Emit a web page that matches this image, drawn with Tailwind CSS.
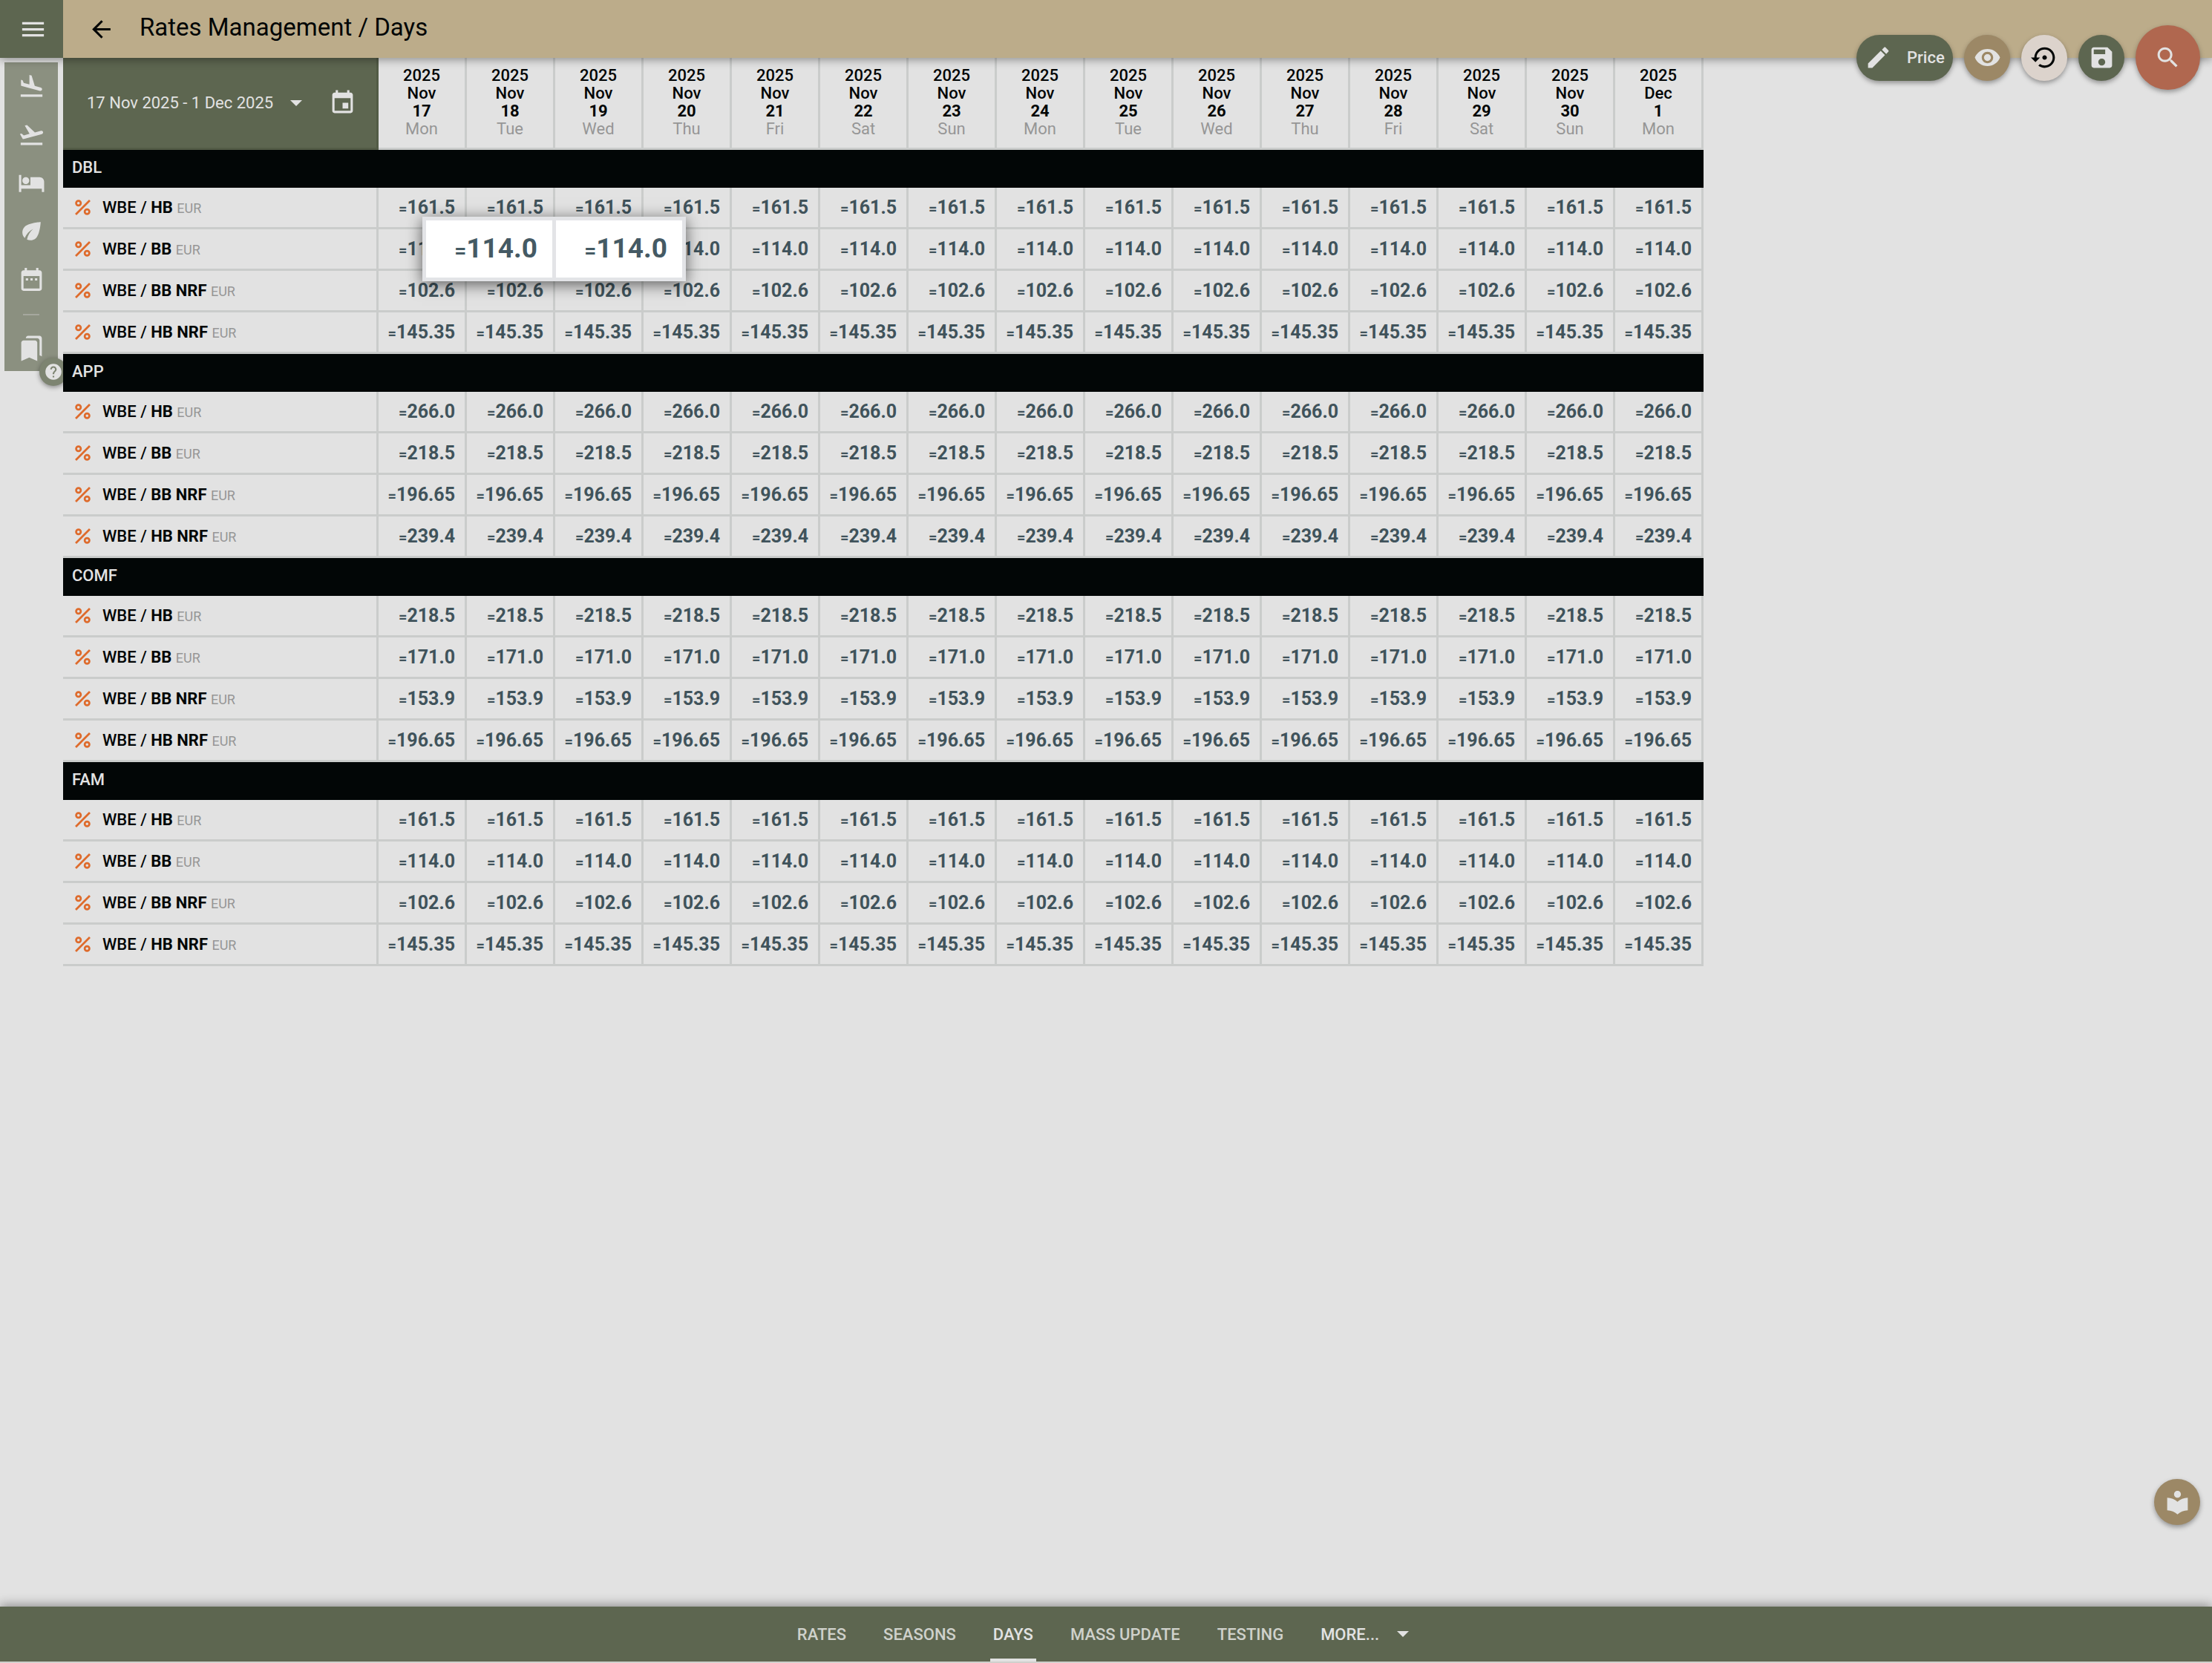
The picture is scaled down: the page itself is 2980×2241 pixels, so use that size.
<!DOCTYPE html>
<html lang="en">
<head>
  <meta charset="UTF-8" />
  <title>Rates Management / Days</title>
  <meta name="viewport" content="width=device-width, initial-scale=1.0">
  <script src="https://cdn.jsdelivr.net/npm/@tailwindcss/browser@4"></script>
</head>
<body class="bg-[#e2e2e2] text-[#020606] font-[Roboto,sans-serif] text-[22px] font-medium">
  <div class="relative flex min-h-screen flex-col">
    <header class="relative z-20 flex h-[78px] bg-[#bcac8a] shadow-[0_2px_12px_rgba(0,0,0,0.4)]">
      <button type="button" aria-label="Menu" class="flex w-[85px] items-center justify-center bg-[#5d6650] pl-[3px] text-[#e2e2e2]">
        <svg class="size-[39px]" viewBox="0 0 24 24" fill="currentColor"><path d="M3 18h18v-2H3v2zm0-5h18v-2H3v2zm0-7v2h18V6H3z"/></svg>
      </button>
      <a href="#" aria-label="Back" class="flex w-[103px] items-center justify-center">
        <svg class="size-[37px]" viewBox="0 0 24 24" fill="currentColor"><path d="M20 11H7.83l5.59-5.59L12 4l-8 8 8 8 1.41-1.41L7.83 13H20v-2z"/></svg>
      </a>
      <h1 class="self-center pb-1 text-[33px] font-normal">Rates Management / Days</h1>

      <!-- page actions -->
      <div class="absolute top-[34px] right-4 flex items-center gap-[15px] text-[#e2e2e2]">
        <button type="button" class="flex h-[62px] w-[130px] items-center gap-5 rounded-full bg-[#5d6650] pl-[11px] shadow-[0_3px_6px_rgba(0,0,0,0.35)]">
          <svg class="size-[37px]" viewBox="0 0 24 24" fill="currentColor"><path d="M3 17.25V21h3.75L17.81 9.94l-3.75-3.75L3 17.25zM20.71 7.04c.39-.39.39-1.02 0-1.41l-2.34-2.34c-.39-.39-1.02-.39-1.41 0l-1.83 1.83 3.75 3.75 1.83-1.83z"/></svg>
          Price
        </button>
        <button type="button" aria-label="Preview" class="flex size-[62px] items-center justify-center rounded-full bg-[#9c8866] shadow-[0_3px_6px_rgba(0,0,0,0.35)]">
          <svg class="size-[37px]" viewBox="0 0 24 24" fill="currentColor"><path d="M12 4.5C7 4.5 2.73 7.61 1 12c1.73 4.39 6 7.5 11 7.5s9.27-3.11 11-7.5c-1.73-4.39-6-7.5-11-7.5zM12 17c-2.76 0-5-2.24-5-5s2.24-5 5-5 5 2.24 5 5-2.24 5-5 5zm0-8c-1.66 0-3 1.34-3 3s1.34 3 3 3 3-1.34 3-3-1.34-3-3-3z"/></svg>
        </button>
        <button type="button" aria-label="Restore" class="flex size-[62px] items-center justify-center rounded-full bg-[#dcd3cc] text-[#020606] shadow-[0_3px_6px_rgba(0,0,0,0.35)]">
          <svg class="size-[37px]" viewBox="0 0 24 24" fill="currentColor"><path d="M14 12c0-1.1-.9-2-2-2s-2 .9-2 2 .9 2 2 2 2-.9 2-2zm-2-9c-4.97 0-9 4.03-9 9H0l4 4 4-4H5c0-3.87 3.13-7 7-7s7 3.13 7 7-3.13 7-7 7c-1.51 0-2.91-.49-4.06-1.3l-1.42 1.44C8.04 20.3 9.94 21 12 21c4.97 0 9-4.03 9-9s-4.03-9-9-9z"/></svg>
        </button>
        <button type="button" aria-label="Save" class="flex size-[62px] items-center justify-center rounded-full bg-[#5d6650] shadow-[0_3px_6px_rgba(0,0,0,0.35)]">
          <svg class="size-[37px]" viewBox="0 0 24 24" fill="currentColor"><path d="M17 3H5c-1.11 0-2 .9-2 2v14c0 1.1.89 2 2 2h14c1.1 0 2-.9 2-2V7l-4-4zm-5 16c-1.66 0-3-1.34-3-3s1.34-3 3-3 3 1.34 3 3-1.34 3-3 3zm3-10H5V5h10v4z"/></svg>
        </button>
        <button type="button" aria-label="Search" class="flex size-[87px] items-center justify-center rounded-full bg-[#b0674f] shadow-[0_3px_6px_rgba(0,0,0,0.35)]">
          <svg class="size-[37px]" viewBox="0 0 24 24" fill="currentColor"><path d="M15.5 14h-.79l-.28-.27C15.41 12.59 16 11.11 16 9.5 16 5.91 13.09 3 9.5 3S3 5.91 3 9.5 5.91 16 9.5 16c1.61 0 3.09-.59 4.23-1.57l.27.28v.79l5 4.99L20.49 19l-4.99-5zm-6 0C7.01 14 5 11.99 5 9.5S7.01 5 9.5 5 14 7.01 14 9.5 11.99 14 9.5 14z"/></svg>
        </button>
      </div>
    </header>

    <div class="flex flex-1 items-start">
      <aside class="w-[85px] pt-[6px] pl-[6px]">
        <div class="relative flex h-[416px] w-[72px] flex-col items-center gap-7 bg-[#8b9080] pt-[14px] text-[#e2e2e2]">
          <a href="#" aria-label="Arrivals"><svg class="size-[37px]" viewBox="0 0 24 24" fill="currentColor"><path d="M2.5 19h19v2h-19v-2zm7.18-5.73l4.35 1.16 5.31 1.42c.8.21 1.62-.26 1.84-1.06.21-.8-.26-1.62-1.06-1.84l-5.31-1.42-2.76-9.02L10.12 2v8.28L5.15 8.95l-.93-2.32-1.45-.39v5.17l1.6.43 5.31 1.43z"/></svg></a>
          <a href="#" aria-label="Departures"><svg class="size-[37px]" viewBox="0 0 24 24" fill="currentColor"><path d="M2.5 19h19v2h-19v-2zm19.57-9.36c-.21-.8-1.04-1.28-1.84-1.06L14.92 10l-6.9-6.43-1.93.51 4.14 7.17-4.97 1.33-1.97-1.54-1.45.39 1.82 3.16.77 1.33 1.6-.43 5.31-1.42 4.35-1.16L21 11.49c.81-.23 1.28-1.05 1.07-1.85z"/></svg></a>
          <a href="#" aria-label="Rooms"><svg class="size-[37px]" viewBox="0 0 24 24" fill="currentColor"><path d="M7 13c1.66 0 3-1.34 3-3S8.66 7 7 7s-3 1.34-3 3 1.34 3 3 3zm12-6h-8v7H3V5H1v15h2v-3h18v3h2v-9c0-2.21-1.79-4-4-4z"/></svg></a>
          <a href="#" aria-label="Seasons"><svg class="size-[37px]" viewBox="0 0 24 24" fill="currentColor"><path d="M6.05 8.05c-2.73 2.73-2.73 7.15-.02 9.88 1.47-3.4 4.09-6.24 7.36-7.93-2.77 2.34-4.71 5.61-5.39 9.32 2.6 1.23 5.8.78 7.95-1.37C19.43 14.47 20 4 20 4S9.53 4.57 6.05 8.05z"/></svg></a>
          <a href="#" aria-label="Calendar"><svg class="size-[37px]" viewBox="0 0 24 24" fill="currentColor"><path d="M9 11H7v2h2v-2zm4 0h-2v2h2v-2zm4 0h-2v2h2v-2zm2-7h-1V2h-2v2H8V2H6v2H5c-1.11 0-2 .9-2 2v14c0 1.1.89 2 2 2h14c1.1 0 2-.9 2-2V6c0-1.1-.9-2-2-2zm0 16H5V9h14v11z"/></svg></a>
          <hr class="-mb-[2px] w-[22px] border-t-2 border-[#a5a89e]">
          <a href="#" aria-label="Bookmarks"><svg class="size-[37px]" viewBox="0 0 24 24" fill="currentColor"><path d="M19 18l2 1V3c0-1.1-.9-2-2-2H8.99C7.89 1 7 1.9 7 3h10c1.1 0 2 .9 2 2v13zM15 5H5c-1.1 0-2 .9-2 2v16l7-3 7 3V7c0-1.1-.9-2-2-2z"/></svg></a>
          <button type="button" aria-label="Help" class="absolute -right-[13px] -bottom-5 flex size-[38px] items-center justify-center rounded-full bg-[#7d8471] shadow-[0_2px_6px_rgba(0,0,0,0.4)]">
            <svg class="size-[26px]" viewBox="0 0 24 24" fill="currentColor"><path d="M12 2C6.48 2 2 6.48 2 12s4.48 10 10 10 10-4.48 10-10S17.52 2 12 2zm1 17h-2v-2h2v2zm2.07-7.75l-.9.92C13.45 12.9 13 13.5 13 15h-2v-.5c0-1.1.45-2.1 1.17-2.83l1.24-1.26c.37-.36.59-.86.59-1.41 0-1.1-.9-2-2-2s-2 .9-2 2H8c0-2.21 1.79-4 4-4s4 1.79 4 4c0 .88-.36 1.68-.93 2.25z"/></svg>
          </button>
        </div>
      </aside>

      <main class="relative z-10">
        <table class="table-fixed border-separate border-spacing-0 bg-[#e2e2e2]">
          <thead>
            <tr id="days">
              <th class="h-[124px] w-[425px] border-r-[3px] border-b-[3px] border-[#525b46] bg-[#5d6650] p-0 text-[#e2e2e2]">
                <div class="flex items-center pl-8 font-normal">
                  <div class="relative">
                    <select aria-label="Period" class="w-[290px] appearance-none">
                      <option>17 Nov 2025 - 1 Dec 2025</option>
                    </select>
                    <svg class="pointer-events-none absolute top-1/2 right-0 h-2 w-4 -translate-y-1/2" viewBox="0 0 16 8" fill="currentColor"><path d="M0 0h16L8 8z"/></svg>
                  </div>
                  <button type="button" aria-label="Pick dates" class="ml-9">
                    <svg class="size-[37px]" viewBox="0 0 24 24" fill="currentColor"><path d="M17 12h-5v5h5v-5zM16 1v2H8V1H6v2H5c-1.11 0-1.99.9-1.99 2L3 19c0 1.1.89 2 2 2h14c1.1 0 2-.9 2-2V5c0-1.1-.9-2-2-2h-1V1h-2zm3 18H5V8h14v11z"/></svg>
                  </button>
                </div>
              </th>
            </tr>
          </thead>
          <tbody id="rates"></tbody>
        </table>

        <!-- selected cells -->
        <div class="absolute top-[214px] left-[484px] flex gap-[5px] border-[5px] border-[#e3e4e7] bg-[#e3e4e7] text-[37px] font-bold text-[#455a64] shadow-[0_4px_20px_rgba(0,0,0,0.6)]">
          <div class="flex h-[77px] w-[170px] items-center justify-end bg-white pr-5 pb-[2px]"><span><span class="text-[28px]">=</span>114.0</span></div>
          <div class="flex h-[77px] w-[170px] items-center justify-end bg-white pr-5 pb-[2px]"><span><span class="text-[28px]">=</span>114.0</span></div>
        </div>
      </main>
    </div>

    <button type="button" aria-label="Guide" class="absolute right-4 bottom-[186px] flex size-[62px] items-center justify-center rounded-full bg-[#9c8866] text-[#e2e2e2] shadow-[0_3px_6px_rgba(0,0,0,0.35)]">
      <svg class="size-[37px]" viewBox="0 0 24 24" fill="currentColor"><path d="M12 11.55C9.64 9.35 6.48 8 3 8v11c3.48 0 6.64 1.35 9 3.55 2.36-2.19 5.52-3.55 9-3.55V8c-3.48 0-6.64 1.35-9 3.55zM12 8c1.66 0 3-1.34 3-3s-1.34-3-3-3-3 1.34-3 3 1.34 3 3 3z"/></svg>
    </button>

    <nav class="flex h-[76px] justify-center gap-[42px] border-b-2 border-[#d0d0cc] bg-[#5d6650] pr-2 text-[#cfd1cb] shadow-[0_-2px_14px_rgba(0,0,0,0.4)]">
      <a href="#" class="flex items-center px-1">RATES</a>
      <a href="#" class="flex items-center px-1">SEASONS</a>
      <a href="#" class="flex items-center border-y-4 border-t-transparent border-b-[#e2e2e2] px-1 text-[#e2e2e2]">DAYS</a>
      <a href="#" class="flex items-center px-1">MASS UPDATE</a>
      <a href="#" class="flex items-center px-1">TESTING</a>
      <button type="button" class="flex items-center gap-6 px-1 text-[#e2e2e2]">
        MORE...
        <svg class="h-2 w-4" viewBox="0 0 16 8" fill="currentColor"><path d="M0 0h16L8 8z"/></svg>
      </button>
    </nav>
  </div>

  <script>
    const days = [
      ['Nov', 17, 'Mon'], ['Nov', 18, 'Tue'], ['Nov', 19, 'Wed'], ['Nov', 20, 'Thu'], ['Nov', 21, 'Fri'],
      ['Nov', 22, 'Sat'], ['Nov', 23, 'Sun'], ['Nov', 24, 'Mon'], ['Nov', 25, 'Tue'], ['Nov', 26, 'Wed'],
      ['Nov', 27, 'Thu'], ['Nov', 28, 'Fri'], ['Nov', 29, 'Sat'], ['Nov', 30, 'Sun'], ['Dec', 1, 'Mon']
    ];
    const plans = ['HB', 'BB', 'BB NRF', 'HB NRF'];
    const rooms = [
      { name: 'DBL', prices: ['161.5', '114.0', '102.6', '145.35'] },
      { name: 'APP', prices: ['266.0', '218.5', '196.65', '239.4'] },
      { name: 'COMF', prices: ['218.5', '171.0', '153.9', '196.65'] },
      { name: 'FAM', prices: ['161.5', '114.0', '102.6', '145.35'] }
    ];

    document.getElementById('days').insertAdjacentHTML('beforeend', days.map(([month, day, week]) => `
      <th class="w-[119px] border-r-[3px] border-b-[3px] border-[#cacccb] p-0 pb-[2px] leading-6 font-medium">
        2025<br>${month}<br><span class="font-bold">${day}</span><br><span class="font-normal text-[#969696]">${week}</span>
      </th>`).join(''));

    document.getElementById('rates').innerHTML = rooms.map(room => `
      <tr><th colspan="16" class="h-[51px] bg-[#020606] p-0 pb-1 pl-3 text-left font-medium text-[#e2e2e2]">${room.name}</th></tr>
      ${plans.map((plan, i) => `
        <tr>
          <th class="h-14 border-r-[3px] border-b-[3px] border-[#cacccb] p-0 text-left font-medium">
            <div class="flex items-center pl-4">
              <svg class="mr-4 size-[21px]" viewBox="0 0 20 20" fill="none" stroke="#de6b2c" stroke-width="2.6"><circle cx="4.5" cy="4.5" r="3"/><circle cx="15.5" cy="15.5" r="3"/><path d="M19 1L1 19"/></svg>
              <span>WBE / <span class="font-bold">${plan}</span> <span class="text-lg font-normal text-[#969696]">EUR</span></span>
            </div>
          </th>
          ${days.map(() => `<td class="border-r-[3px] border-b-[3px] border-[#cacccb] p-0 pr-[13px] text-right text-[25px] font-bold text-[#40535b]"><span class="text-xl">=</span>${room.prices[i]}</td>`).join('')}
        </tr>`).join('')}`).join('');
  </script>
</body>
</html>
